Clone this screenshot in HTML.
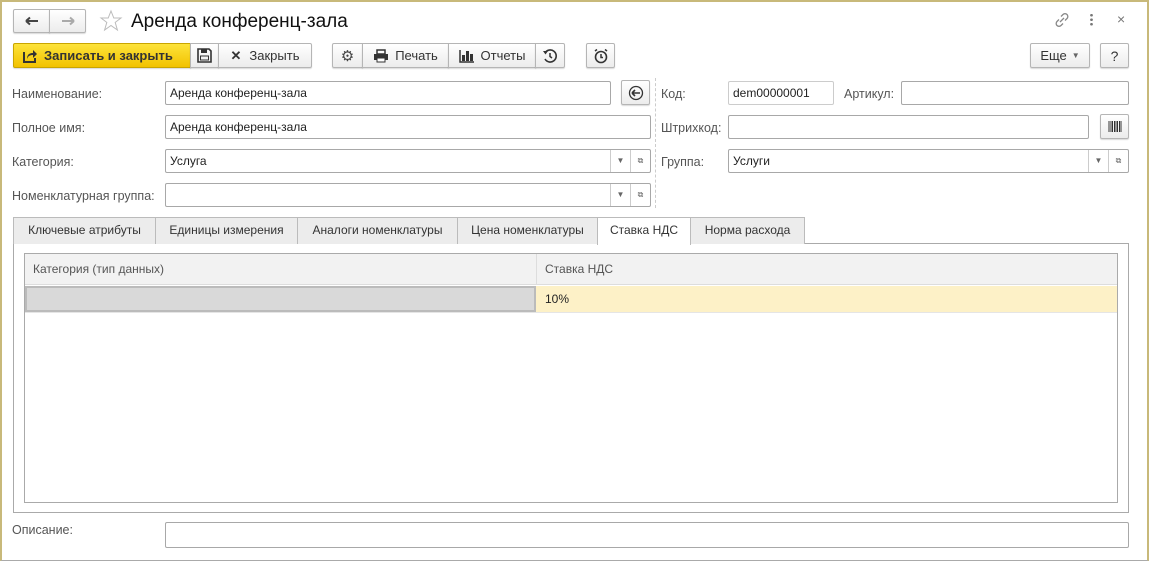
<!DOCTYPE html>
<html><head><meta charset="utf-8"><style>
*{box-sizing:border-box;margin:0;padding:0}
body{width:1149px;height:561px;overflow:hidden;background:#fff;font-family:"Liberation Sans",Arial,sans-serif;font-size:12px;color:#333;position:relative}
.a{position:absolute}
.win{left:0;top:0;width:1149px;height:561px;border-left:2px solid #c8b97a;border-top:2px solid #c8b97a;border-right:2px solid #c8b97a;border-bottom:1px solid #aaa}
.btn{position:absolute;border:1px solid #b5b5b5;border-radius:2px;background:linear-gradient(#fff,#ececec);box-shadow:0 1px 1px rgba(0,0,0,.15);display:flex;align-items:center;justify-content:center;color:#333}
.inp{position:absolute;border:1px solid #a8a8a8;border-radius:2px;background:#fff;height:24px;padding-left:4px;line-height:22px;color:#222}
.lbl{position:absolute;color:#555;font-size:12.5px}
.dd{position:absolute;top:0;height:22px;width:20px;border-left:1px solid #ccc;display:flex;align-items:center;justify-content:center;font-size:8px;color:#666}
.tab{position:absolute;top:217px;height:27px;border:1px solid #bbb;border-bottom:none;background:#ececec;line-height:25px;text-align:center;color:#333}
</style></head><body>
<div class="a win"></div>
<div class="btn" style="left:13px;top:9px;width:37px;height:24px;border-radius:2px 0 0 2px"><svg width="14" height="10"><path d="M1 5H13M1 5L5 1.5M1 5L5 8.5" stroke="#444" stroke-width="2" fill="none"/></svg></div>
<div class="btn" style="left:49px;top:9px;width:37px;height:24px;border-radius:0 2px 2px 0"><svg width="14" height="10"><path d="M1 5H13M13 5L9 1.5M13 5L9 8.5" stroke="#aaa" stroke-width="2" fill="none"/></svg></div>
<svg class="a" style="left:99px;top:9px" width="24" height="24"><path d="M12 2L14.8 9H22L16.2 13.4L18.4 21L12 16.5L5.6 21L7.8 13.4L2 9H9.2Z" fill="none" stroke="#bbb"/></svg>
<div class="a" style="left:131px;top:11px;font-size:19px;color:#111">Аренда конференц-зала</div>
<svg class="a" style="left:1054px;top:12px" width="16" height="16"><path d="M6 10L10 6M7 4.5L9 2.5a2.8 2.8 0 0 1 4 4L11 8.5M9 11.5L7 13.5a2.8 2.8 0 0 1 -4 -4L5 7.5" stroke="#888" fill="none" stroke-width="1.3"/></svg>
<div class="a" style="left:1090px;top:13px;width:3px;height:14px;background:radial-gradient(circle,#777 1.2px,transparent 1.5px) 0 0/3px 4.5px"></div>
<div class="a" style="left:1117px;top:11px;color:#777;font-size:14px">×</div>

<div class="btn" style="left:13px;top:43px;width:178px;height:25px;background:linear-gradient(#fde33a,#f2c200);border-color:#c9a500;border-radius:2px 0 0 2px;justify-content:flex-start;padding-left:8px;font-weight:bold;font-size:13px;color:#333"><svg width="16" height="16" style="margin-right:6px"><path d="M2 4V14H13V10" stroke="#333" stroke-width="2" fill="none"/><path d="M5 11C5 6 8 5 11 5V2L15 6L11 10V7C8 7 6 8 5 11Z" fill="#333"/></svg>Записать и закрыть</div>
<div class="btn" style="left:190px;top:43px;width:29px;height:25px;border-radius:0"><svg width="15" height="15"><path d="M1 1H12L14 3V14H1Z" fill="none" stroke="#333" stroke-width="1.6"/><rect x="4" y="1" width="6" height="4" fill="#333"/><rect x="3.5" y="8" width="8" height="4" fill="none" stroke="#333"/></svg></div>
<div class="btn" style="left:218px;top:43px;width:94px;height:25px;border-radius:0 2px 2px 0;font-size:13px"><span style="font-weight:bold;margin-right:8px">✕</span>Закрыть</div>

<div class="btn" style="left:332px;top:43px;width:31px;height:25px;border-radius:2px 0 0 2px;font-size:15px;color:#444">⚙</div>
<div class="btn" style="left:362px;top:43px;width:87px;height:25px;border-radius:0;font-size:13px"><svg width="16" height="14" style="margin-right:6px"><rect x="4" y="1" width="8" height="4" fill="none" stroke="#333" stroke-width="1.5"/><rect x="1" y="5" width="14" height="6" fill="#333"/><rect x="4" y="9" width="8" height="4" fill="#fff" stroke="#333"/></svg>Печать</div>
<div class="btn" style="left:448px;top:43px;width:88px;height:25px;border-radius:0;font-size:13px"><svg width="16" height="14" style="margin-right:6px"><path d="M1 1V13H15" stroke="#333" stroke-width="1.5" fill="none"/><rect x="3" y="6" width="3" height="6" fill="#333"/><rect x="7" y="2" width="3" height="10" fill="#333"/><rect x="11" y="5" width="3" height="7" fill="#333"/></svg>Отчеты</div>
<div class="btn" style="left:535px;top:43px;width:30px;height:25px;border-radius:0 2px 2px 0"><svg width="16" height="16"><path d="M3 5A6 6 0 1 1 3 11" stroke="#333" stroke-width="1.6" fill="none"/><path d="M1 3L3.5 6.5L6 3" fill="#333"/><path d="M8 5V8.5L10 10" stroke="#333" stroke-width="1.5" fill="none"/></svg></div>
<div class="btn" style="left:586px;top:43px;width:29px;height:25px"><svg width="16" height="16"><circle cx="8" cy="9" r="5.5" stroke="#333" stroke-width="1.6" fill="none"/><path d="M8 6V9.5H10M2 3L4 1.5M14 3L12 1.5" stroke="#333" stroke-width="1.5" fill="none"/></svg></div>
<div class="btn" style="left:1030px;top:43px;width:60px;height:25px;font-size:13px">Еще <span style="font-size:8px;margin-left:5px;color:#666">▼</span></div>
<div class="btn" style="left:1100px;top:43px;width:29px;height:25px;font-size:14px">?</div>

<div class="lbl" style="left:12px;top:87px">Наименование:</div>
<div class="inp" style="left:165px;top:81px;width:446px">Аренда конференц-зала</div>
<div class="btn" style="left:621px;top:80px;width:29px;height:25px"><svg width="16" height="16"><circle cx="8" cy="8" r="6.5" stroke="#333" stroke-width="1.3" fill="none"/><path d="M4 8H12M4 8L7 5M4 8L7 11" stroke="#333" stroke-width="1.6" fill="none"/></svg></div>
<div class="a" style="left:655px;top:78px;height:130px;border-left:1px dashed #ccc"></div>
<div class="lbl" style="left:661px;top:87px">Код:</div>
<div class="inp" style="left:728px;top:81px;width:106px;border-color:#ccc">dem00000001</div>
<div class="lbl" style="left:844px;top:87px">Артикул:</div>
<div class="inp" style="left:901px;top:81px;width:228px"></div>

<div class="lbl" style="left:12px;top:121px">Полное имя:</div>
<div class="inp" style="left:165px;top:115px;width:486px">Аренда конференц-зала</div>
<div class="lbl" style="left:661px;top:121px">Штрихкод:</div>
<div class="inp" style="left:728px;top:115px;width:361px"></div>
<div class="btn" style="left:1100px;top:114px;width:29px;height:25px"><svg width="14" height="11"><path d="M1 0V11M3 0V11M4.5 0V11M6.5 0V11M8 0V11M9.5 0V11M11.5 0V11M13 0V11" stroke="#333"/></svg></div>

<div class="lbl" style="left:12px;top:155px">Категория:</div>
<div class="inp" style="left:165px;top:149px;width:486px">Услуга<div class="dd" style="right:20px">▼</div><div class="dd" style="right:0">⧉</div></div>
<div class="lbl" style="left:661px;top:155px">Группа:</div>
<div class="inp" style="left:728px;top:149px;width:401px">Услуги<div class="dd" style="right:20px">▼</div><div class="dd" style="right:0">⧉</div></div>

<div class="lbl" style="left:12px;top:189px">Номенклатурная группа:</div>
<div class="inp" style="left:165px;top:183px;width:486px"><div class="dd" style="right:20px">▼</div><div class="dd" style="right:0">⧉</div></div>

<div class="a" style="left:13px;top:243px;width:1116px;height:270px;border:1px solid #aaa"></div>
<div class="tab" style="left:13px;width:143px">Ключевые атрибуты</div>
<div class="tab" style="left:155px;width:143px">Единицы измерения</div>
<div class="tab" style="left:297px;width:161px">Аналоги номенклатуры</div>
<div class="tab" style="left:457px;width:141px">Цена номенклатуры</div>
<div class="tab" style="left:597px;width:94px;background:#fff;height:28px">Ставка НДС</div>
<div class="tab" style="left:690px;width:115px">Норма расхода</div>

<div class="a" style="left:24px;top:253px;width:1094px;height:250px;border:1px solid #aaa"></div>
<div class="a" style="left:25px;top:254px;width:1092px;height:31px;background:#f2f2f2;border-bottom:1px solid #ddd"></div>
<div class="a" style="left:536px;top:254px;height:31px;border-left:1px solid #ddd"></div>
<div class="a" style="left:33px;top:262px;color:#555">Категория (тип данных)</div>
<div class="a" style="left:545px;top:262px;color:#555">Ставка НДС</div>
<div class="a" style="left:25px;top:286px;width:511px;height:26px;background:#d9d9d9;border:2px solid #bbb"></div>
<div class="a" style="left:536px;top:286px;width:581px;height:26px;background:#fdf1c7;padding:6px 0 0 9px;color:#222">10%</div>
<div class="a" style="left:25px;top:312px;width:1092px;border-top:1px solid #e5e5e5"></div>

<div class="lbl" style="left:12px;top:523px">Описание:</div>
<div class="inp" style="left:165px;top:522px;width:964px;height:26px"></div>
</body></html>
